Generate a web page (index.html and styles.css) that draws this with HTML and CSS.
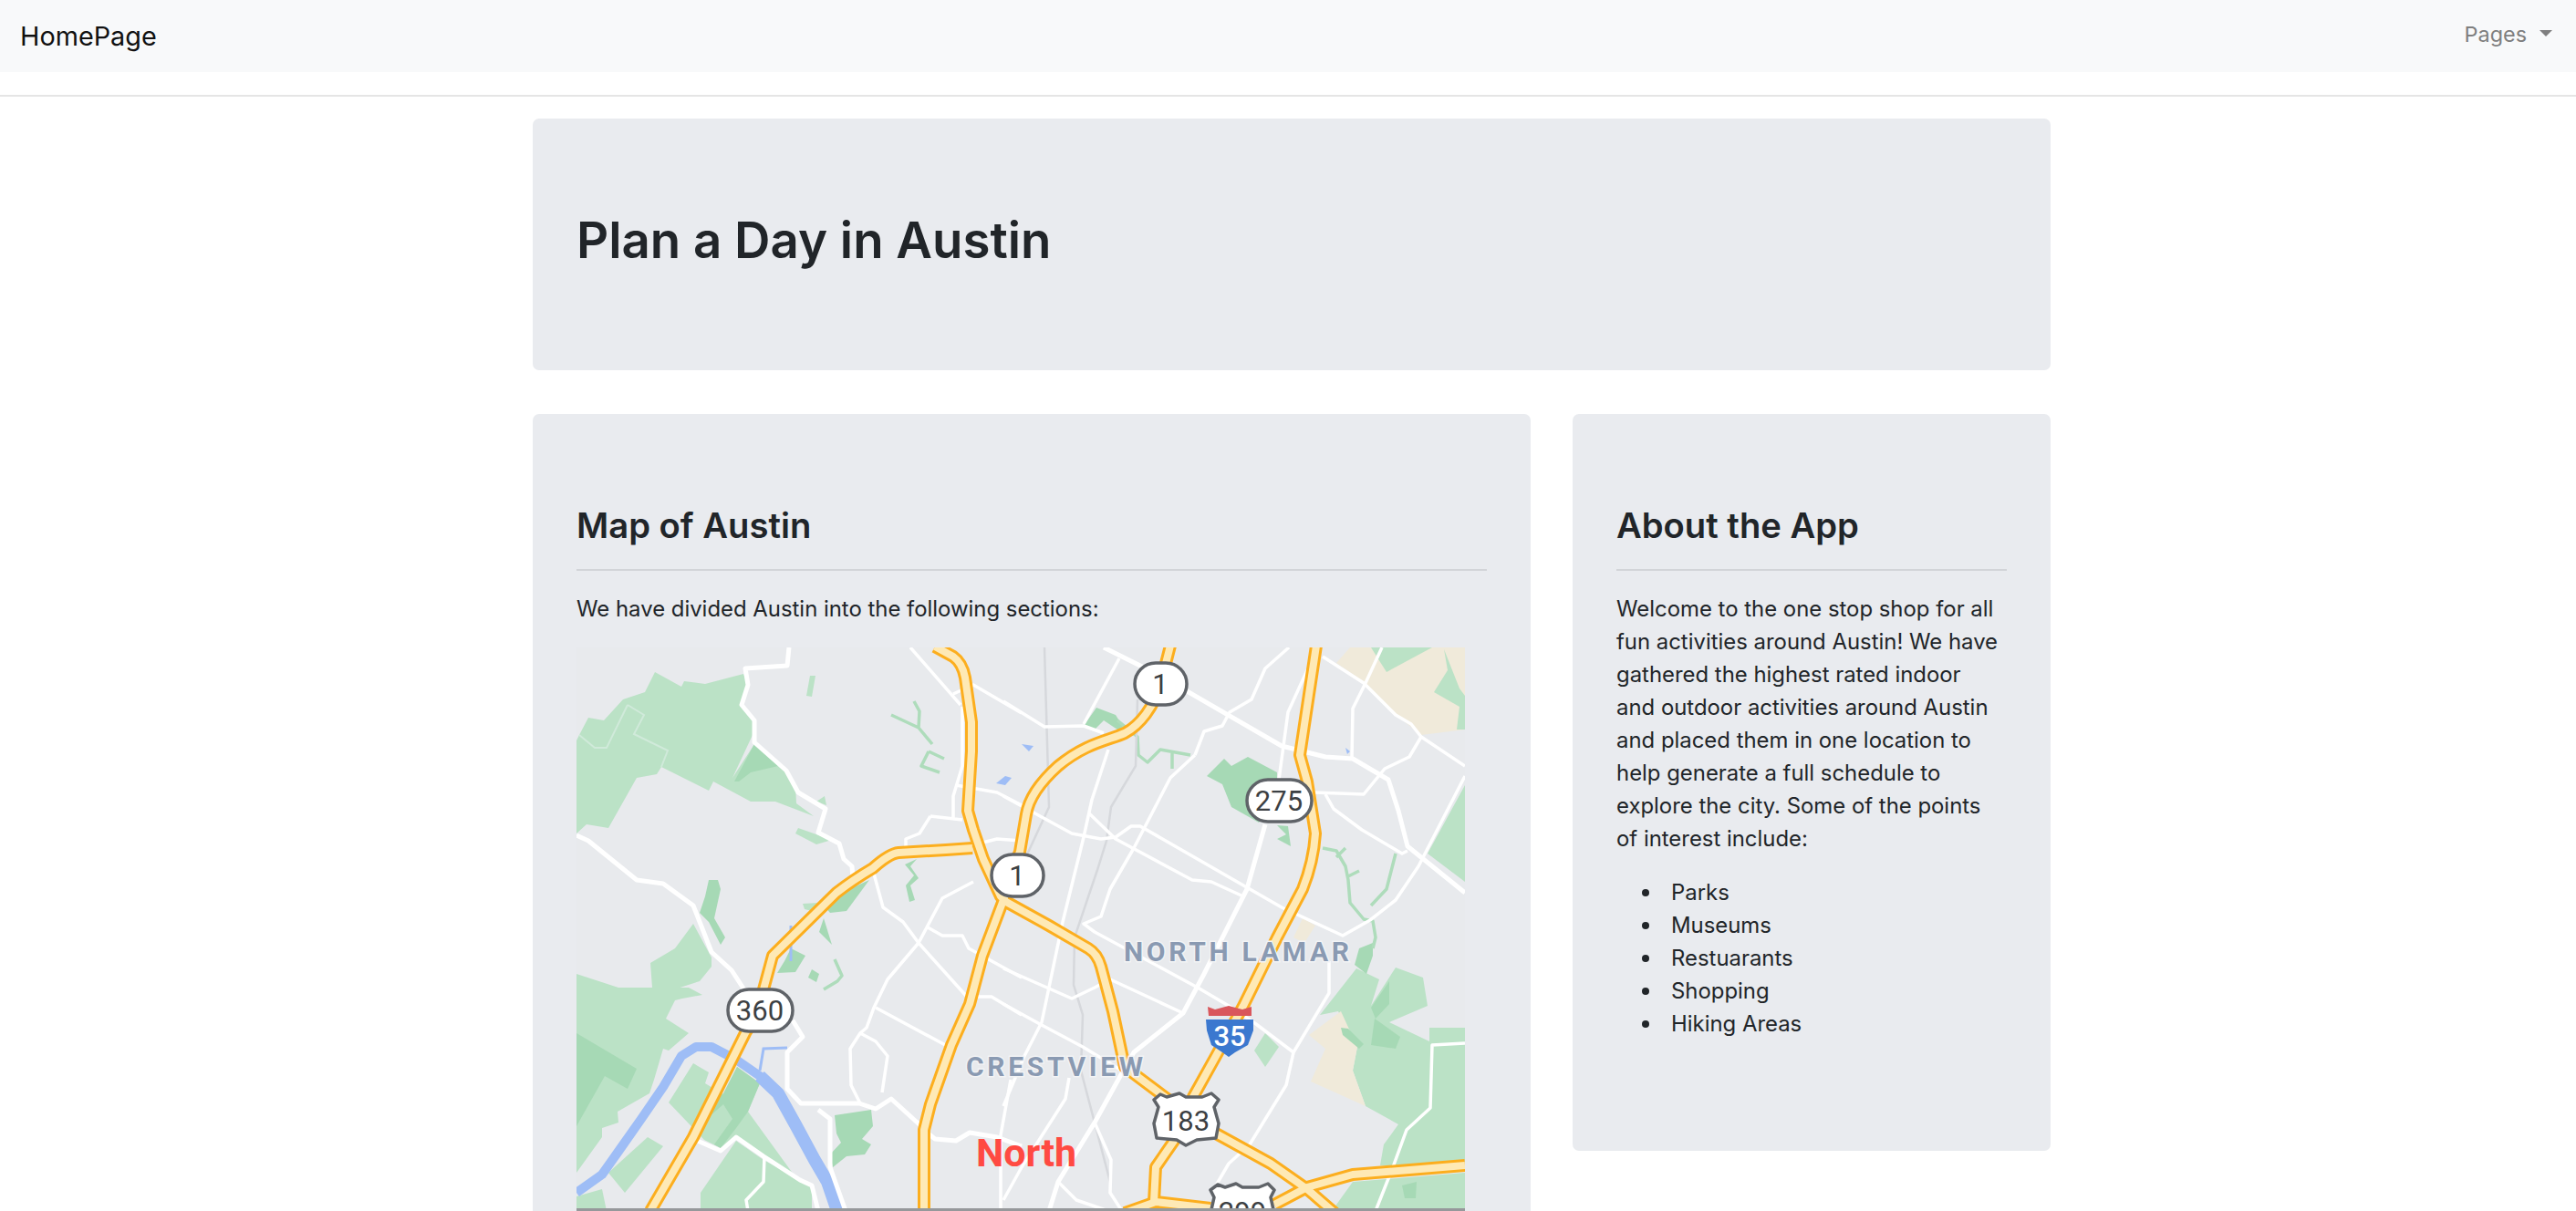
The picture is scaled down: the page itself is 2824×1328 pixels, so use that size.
FILE: index.html
```html
<!DOCTYPE html>
<html lang="en">
<head>
  <meta charset="UTF-8">
  <meta name="viewport" content="width=device-width, initial-scale=1.0">
  <title>Plan a Day in Austin</title>
  <link rel="stylesheet" href="styles.css">
</head>
<body>
  <nav class="navbar">
    <a class="brand" href="#">HomePage</a>
    <a class="nav-link" href="#">Pages<span class="caret"></span></a>
  </nav>
  <hr class="top-rule">

  <main class="container">
    <header class="jumbotron">
      <h1>Plan a Day in Austin</h1>
    </header>

    <div class="row">
      <section class="card card-map">
        <h2>Map of Austin</h2>
        <hr>
        <p>We have divided Austin into the following sections:</p>
        <svg class="map" viewBox="632 710 974 618" role="img" aria-label="Map of north Austin">
          <defs>
            <g id="highways">
              <path d="M1025 709 1045 720Q1055 727 1058 743L1065 792V824L1061 889 1067 910 1078 942 1097 983 1103 989 1150 1015 1193 1040Q1203 1046 1207 1060L1220 1109 1233 1170 1277 1203 1301 1222"/>
              <path d="M1283 708 1272 751C1265 775 1250 795 1233 804 1215 812 1190 815 1160 840 1140 858 1128 875 1125 893L1118 934 1108 960 1100 987 1077 1048 1063 1101 1043 1146 1020 1211 1013 1239V1328"/>
              <path d="M1066 930 1037 932 985 935Q975 936 957 952 935 965 917 979L847 1048 837 1085 832 1108 817 1133 760 1247 713 1328"/>
              <path d="M1443 708 1425 828 1433 857 1442 914Q1440 945 1428 975L1400 1028 1363 1103 1333 1158 1308 1203 1287 1251 1267 1280 1265 1318"/>
              <path d="M1333 1243 1393 1276 1433 1304 1463 1330"/>
              <path d="M1606 1278 1483 1288 1433 1302 1397 1321"/>
              <path d="M1233 1330 1267 1318 1327 1325"/>
            </g>
          </defs>

          <rect class="land" x="632" y="710" width="974" height="618"/>

          <!-- parks -->
          <g class="park">
            <path d="M632 914 643 904 667 908 698 853 720 849 725 841 777 867 782 857 823 879H850L892 895 873 881 872 861 862 847 827 816 803 853 825 806V788L813 773 820 751 815 739 773 750 750 747 747 753 718 737 707 759 683 767 662 790 645 787 635 806 632 812Z"/>
            <path d="M713 1056 740 1040 760 1013 780 1050V1060L767 1076 733 1087 715 1083Z"/>
            <path d="M632 1068 678 1083 755 1083 770 1091 748 1095 740 1097 730 1117 755 1133 733 1152 727 1150 717 1184 712 1199 677 1219 678 1231 660 1237V1247L632 1286Z"/>
            <path d="M667 1286 710 1247 727 1257 685 1308Z"/>
            <path d="M733 1209 760 1166 777 1176 773 1188 793 1200 808 1170 833 1188 820 1219 870 1288 807 1247 790 1259 772 1250Z"/>
            <path d="M768 1308 807 1251 837 1272 890 1300V1328H768Z"/>
            <path d="M632 1312 660 1304 665 1328H632Z"/>
            <path d="M875 908 912 921 895 926 872 914Z"/>
            <path d="M895 879 904 873 906 883Z"/>
            <path d="M884 763 888 741H894L890 764Z"/>
            <path d="M880 991 897 990 890 999 882 997Z"/>
            <path d="M1447 1113 1487 1062 1512 1074 1503 1103 1530 1061 1560 1072 1565 1103 1523 1121 1567 1142V1127H1606V1278H1513L1517 1255 1533 1233 1497 1213 1483 1174 1488 1148 1467 1109Z"/>
            <path d="M1460 1328 1483 1296 1606 1286V1328Z"/>
            <path d="M1606 861 1565 936 1606 967Z"/>
            <path d="M1375 1152 1387 1133 1402 1148 1387 1170Z"/>
          </g>
          <g class="tan">
            <path d="M1465 727 1480 710H1606V800L1558 806 1533 786 1497 749Z"/>
            <path d="M1435 1135 1470 1109 1488 1148 1483 1174 1497 1213 1437 1186 1453 1150Z"/>
            <path d="M1428 1007 1442 1015 1430 1034 1418 1028Z"/>
          </g>
          <g class="tan-green">
            <path d="M1503 710H1570L1520 737Z"/>
            <path d="M1583 712 1587 735 1572 759 1600 775 1597 800H1606V763L1600 755Z"/>
          </g>
          <g class="park-dark">
            <path d="M827 816 853 840 823 847 810 857H805Z"/>
            <path d="M632 1133 698 1172 688 1194 663 1180 632 1235Z"/>
            <path d="M777 965H787L790 975 783 1007 795 1028 790 1036 777 1011 767 1001 773 983Z"/>
            <path d="M808 1170 833 1188 820 1219 807 1237 790 1259 783 1255 803 1227 793 1211 777 1225 773 1218 793 1199Z"/>
            <path d="M915 1223 955 1217 957 1235 945 1249 955 1255 948 1266 928 1268 913 1280 910 1266 922 1253 917 1243Z"/>
            <path d="M953 965 928 999 910 1001 903 993 918 981Z"/>
            <path d="M903 1007 912 1036 898 1022Z"/>
            <path d="M867 1040 883 1048 872 1066 852 1067 860 1054Z"/>
            <path d="M890 1063 898 1068 895 1077 886 1072Z"/>
            <path d="M992 948 1005 942 998 950 1007 963 998 971 1003 987 997 989 993 971 1002 960Z"/>
            <path d="M1188 796 1202 776 1223 784 1233 800 1225 800 1210 790 1200 800Z"/>
            <path d="M1323 851 1342 832 1350 840 1368 830 1400 847V870L1380 902 1350 885 1340 860Z"/>
            <path d="M1400 905 1412 906 1415 928 1400 920 1410 915Z"/>
            <path d="M1485 1058 1490 1040 1505 1034V1048L1498 1068Z"/>
            <path d="M1503 1105 1523 1076V1101L1508 1117Z"/>
            <path d="M1503 1146 1507 1117 1535 1137 1530 1150Z"/>
            <path d="M1470 1127 1478 1128 1495 1145 1490 1150 1472 1135Z"/>
            <path d="M1537 1300 1553 1296 1552 1314H1540Z"/>
          </g>
          <g class="stream">
            <path d="M977 784 1007 798 1022 816M1002 769 1008 780 1007 798M1018 824 1035 832M1018 824 1010 840 1030 847"/>
            <path d="M915 1052 923 1070 918 1076 903 1085"/>
            <path d="M1225 790 1247 808 1248 828 1258 836 1272 822 1305 828M1285 826V843"/>
            <path d="M1450 930 1465 933 1475 950 1478 965 1480 990 1495 1008 1505 1010 1508 1028 1505 1040M1475 930 1465 940M1490 955 1476 962M1530 936 1520 975 1503 993"/>
          </g>
          <path class="park-line" d="M688 773 706 784 695 805 732 823 725 841M688 773 665 820H652L635 806"/>
          <path class="rail" d="M1145 710 1150 885 1120 950M1247 767 1245 840 1218 885 1213 922 1203 954 1178 1028 1177 1080 1187 1113 1185 1174 1200 1231 1218 1300"/>

          <!-- water -->
          <path class="river" d="M632 1308 660 1288 677 1264 703 1227 727 1192 747 1158 763 1148H780L807 1162 833 1180 853 1199"/>
          <path class="river-wide" d="M833 1180 853 1199 873 1235 893 1272 907 1296 918 1328"/>
          <path class="creek" d="M863 1149 837 1150 833 1174M867 1015V1054"/>
          <g class="water">
            <path d="M1092 859 1102 851 1109 853 1102 861Z"/>
            <path d="M1120 816 1133 818 1128 824Z"/>
            <path d="M1475 820 1480 824 1477 827Z"/>
          </g>

          <!-- roads -->
          <g class="road">
            <path d="M865 710 863 730 817 733 820 751 813 773 827 790V814L862 845 875 869 905 887 897 913 920 925 925 942 934 950 935 963"/>
            <path d="M632 916 645 922 698 965 727 969 760 993 780 1044 802 1064 817 1087"/>
            <path d="M869 1119 880 1137 863 1154V1194L878 1210H942L960 1216 977 1205 1010 1235"/>
            <path d="M1210 710 1260 735 1303 759 1405 818 1453 830 1483 832 1522 855 1533 889 1543 928 1606 979"/>
            <path d="M1387 904 1367 975 1320 1068 1297 1111 1243 1154 1227 1182 1200 1231 1160 1296 1150 1328"/>
            <path d="M760 1249 790 1262 807 1247 837 1268 877 1294 890 1300 897 1328"/>
            <path d="M1010 1237 1025 1249 1048 1251 1063 1242 1093 1247 1120 1257"/>
            <path d="M897 1217 910 1227V1280L927 1328"/>
          </g>
          <g class="road-minor">
            <path d="M967 1198 973 1158 960 1142 943 1133 932 1150 933 1190 943 1210"/>
            <path d="M1067 967 1033 985 1007 1034 973 1074 958 1105 950 1127 943 1133"/>
            <path d="M958 958 968 995 990 1011 1007 1034 1060 1093 1087 1093 1120 1113"/>
            <path d="M960 1105 1040 1148"/>
            <path d="M1017 1017 1033 1026H1055L1062 1040 1120 1072"/>
            <path d="M998 710 1053 773M1045 761 1067 751 1120 782"/>
            <path d="M1055 775V840L1045 873V897M1020 895 1055 899M1020 895 1008 914 993 920V932"/>
            <path d="M1048 861 1093 869 1120 883"/>
            <path d="M1077 924 1093 920 1120 922"/>
            <path d="M838 1268 837 1296 818 1316 820 1328"/>
            <path d="M1108 1184 1097 1245V1328"/>
            <path d="M1227 722 1188 794"/>
            <path d="M1100 769 1145 797 1188 796 1210 804"/>
            <path d="M1215 822 1197 877 1188 918 1165 1011 1142 1121 1123 1158 1100 1213"/>
            <path d="M1100 873 1175 914 1207 920 1223 918 1240 906H1250L1405 995 1472 1026 1502 1009 1530 987 1555 950 1606 851"/>
            <path d="M1193 891 1223 920 1307 965 1328 967 1363 983"/>
            <path d="M1310 828 1283 853 1243 930 1217 975 1207 1005 1188 1013 1200 1022 1313 1083 1347 1103 1377 1123 1418 1154"/>
            <path d="M1310 828 1320 802 1340 796 1348 781 1372 767 1387 733 1413 710"/>
            <path d="M1433 735 1412 781 1407 818 1402 855"/>
            <path d="M1450 720 1495 749 1530 784 1547 794 1558 808 1606 840"/>
            <path d="M1515 710 1497 749 1483 777 1482 832"/>
            <path d="M1558 808 1545 830 1518 843 1495 871 1440 869"/>
            <path d="M1453 871 1462 887 1493 910 1537 936 1543 933"/>
            <path d="M1100 1062 1175 1095 1200 1083 1217 1074 1297 1111"/>
            <path d="M1100 1101 1140 1123 1187 1148 1233 1176"/>
            <path d="M1457 1054V1089L1418 1154 1410 1190 1370 1255 1347 1276 1333 1300"/>
            <path d="M1606 1144 1570 1146 1568 1215 1542 1239 1527 1280 1508 1328"/>
            <path d="M1200 1231 1218 1272 1217 1308 1230 1328"/>
            <path d="M1172 1182 1168 1205 1120 1280 1100 1316"/>
            <path d="M1160 1296 1180 1316 1215 1328"/>
          </g>

          <use class="hw-edge" href="#highways"/>
          <use class="hw-fill" href="#highways"/>

          <!-- area labels -->
          <text class="area-label" x="1232" y="1054">NORTH LAMAR</text>
          <text class="area-label" x="1059" y="1180">CRESTVIEW</text>
          <text class="section-label" x="1070" y="1279">North</text>

          <!-- route shields -->
          <rect class="shield" x="1244" y="727" width="57" height="46" rx="23"/>
          <text class="shield-text" x="1272" y="761">1</text>
          <rect class="shield" x="1087" y="937" width="57" height="46" rx="23"/>
          <text class="shield-text" x="1115" y="971">1</text>
          <rect class="shield" x="1367" y="855" width="71" height="46" rx="23"/>
          <text class="shield-text" x="1402" y="889">275</text>
          <rect class="shield" x="798" y="1085" width="71" height="46" rx="23"/>
          <text class="shield-text" x="833" y="1119">360</text>

          <path class="shield" d="M1272 1200 1279 1203 1293 1199 1300 1203 1318 1203 1328 1199 1336 1206 1331 1214 1336 1232 1333 1248 1312 1250 1300 1256 1290 1250 1268 1248 1265 1232 1270 1214 1265 1206Z"/>
          <text class="shield-text" x="1300" y="1240">183</text>
          <path class="shield" d="M1335 1299 1343 1302 1355 1298 1362 1302 1380 1302 1390 1298 1397 1305 1393 1313 1397 1331H1327L1331 1313 1327 1305Z"/>
          <text class="shield-text" x="1362" y="1340">299</text>

          <path class="i-red" d="M1325 1114 1324 1104 1332 1107 1347 1103 1362 1107 1372 1104 1372 1114Z"/>
          <path class="i-blue" d="M1322 1118H1374V1130L1368 1146 1354 1154 1347 1159 1340 1154 1328 1146 1323 1130Z"/>
          <text class="i-text" x="1348" y="1147">35</text>

          <rect class="map-edge" x="632" y="1325" width="974" height="3"/>
        </svg>
      </section>

      <aside class="card card-about">
        <h2>About the App</h2>
        <hr>
        <p>Welcome to the one stop shop for all fun activities around Austin! We have gathered the highest rated indoor and outdoor activities around Austin and placed them in one location to help generate a full schedule to explore the city. Some of the points of interest include:</p>
        <ul>
          <li>Parks</li>
          <li>Museums</li>
          <li>Restuarants</li>
          <li>Shopping</li>
          <li>Hiking Areas</li>
        </ul>
      </aside>
    </div>
  </main>
</body>
</html>
```

FILE: styles.css
```css
/* General styles */
html, body {
  height: 100%;
}

body {
  margin: 0;
  overflow: hidden;
  background-color: #fff;
  color: #212529;
  font-family: Inter, "Liberation Sans", sans-serif;
  font-size: 23.9px;
  line-height: 36px;
}

/* Navbar */
.navbar {
  display: flex;
  align-items: center;
  justify-content: space-between;
  height: 79px;
  padding: 0 26px 0 22px;
  background-color: #f8f9fa;
}

.brand {
  color: #111;
  font-size: 28.8px;
  text-decoration: none;
}

.nav-link {
  display: flex;
  align-items: center;
  margin-bottom: 4px;
  color: #7f7f7f;
  font-size: 23.4px;
  text-decoration: none;
}

.caret {
  width: 0;
  height: 0;
  margin-left: 14px;
  margin-bottom: 3px;
  border-top: 7px solid #7f7f7f;
  border-left: 7px solid transparent;
  border-right: 7px solid transparent;
}

.top-rule {
  height: 2px;
  margin: 25px 0 24px;
  border: 0;
  background-color: #e5e5e5;
}

/* Page content */
.container {
  width: 1664px;
  margin-left: 584px;
}

.jumbotron {
  display: flex;
  align-items: center;
  height: 276px;
  padding: 0 48px;
  box-sizing: border-box;
  background-color: #e9ebef;
  border-radius: 7px;
}

h1 {
  margin: 0 0 11px;
  font-size: 54.6px;
  font-weight: 600;
  line-height: 70px;
}

.row {
  display: flex;
  align-items: flex-start;
  gap: 46px;
  margin-top: 48px;
}

.card {
  box-sizing: border-box;
  padding: 96px 48px 0;
  background-color: #e9ebef;
  border-radius: 7px;
}

.card-map {
  width: 1094px;
  height: 900px;
}

.card-about {
  width: 524px;
  height: 808px;
}

h2 {
  margin: 0;
  font-size: 38.2px;
  font-weight: 600;
  line-height: 52px;
}

.card hr {
  height: 2px;
  margin: 22px 0 0;
  border: 0;
  background-color: #d2d4d8;
}

.card p {
  max-width: 420px;
  margin: 24px 0 0;
}

.card-map p {
  max-width: none;
}

.card ul {
  margin: 23px 0 0;
  padding-left: 60px;
  list-style: none;
}

.card li {
  position: relative;
}

.card li::before {
  content: "";
  position: absolute;
  left: -32px;
  top: 14px;
  width: 8px;
  height: 8px;
  border-radius: 50%;
  background-color: #212529;
}

/* Map */
.map {
  display: block;
  width: 974px;
  height: 618px;
  margin-top: 24px;
}

.land { fill: #e8eaed; }
.park { fill: #bbe2c6; }
.park-dark { fill: #a6d9b5; }
.tan { fill: #f0eada; }
.tan-green { fill: #bbe2c6; }

.stream {
  fill: none;
  stroke: #aedcbb;
  stroke-width: 3.5;
  stroke-linejoin: round;
}

.park-line {
  fill: none;
  stroke: #d0eada;
  stroke-width: 2;
}

.rail {
  fill: none;
  stroke: #d6d8dc;
  stroke-width: 2.5;
}

.river, .river-wide {
  fill: none;
  stroke: #9ebdf6;
  stroke-linejoin: round;
}

.river { stroke-width: 10; }
.river-wide { stroke-width: 14; }

.creek {
  fill: none;
  stroke: #9ebdf6;
  stroke-width: 3;
}

.water { fill: #9ebdf6; }

.road, .road-minor {
  fill: none;
  stroke: #fff;
  stroke-linejoin: round;
}

.road { stroke-width: 5; }
.road-minor { stroke-width: 3.5; }

.hw-edge, .hw-fill {
  fill: none;
  stroke-linejoin: round;
}

.hw-edge {
  stroke: #fcae1e;
  stroke-width: 14;
}

.hw-fill {
  stroke: #fee9b5;
  stroke-width: 8;
}

.area-label {
  fill: #8a9ab2;
  stroke: #f2f3f5;
  stroke-width: 3;
  paint-order: stroke;
  font-family: Roboto, sans-serif;
  font-size: 30px;
  font-weight: 700;
  letter-spacing: 3.7px;
}

.section-label {
  fill: #ff4a42;
  font-family: Roboto, sans-serif;
  font-size: 43px;
  font-weight: 700;
}

.shield {
  fill: #fff;
  stroke: #5f6368;
  stroke-width: 3.5;
  stroke-linejoin: round;
}

.shield-text {
  fill: #3c4043;
  font-family: Roboto, sans-serif;
  font-size: 31px;
  text-anchor: middle;
}

.i-red { fill: #d9575c; }
.i-blue { fill: #3b78cf; }

.i-text {
  fill: #fff;
  font-family: Roboto, sans-serif;
  font-size: 31px;
  font-weight: 500;
  text-anchor: middle;
}

.map-edge { fill: #96989b; }
```
